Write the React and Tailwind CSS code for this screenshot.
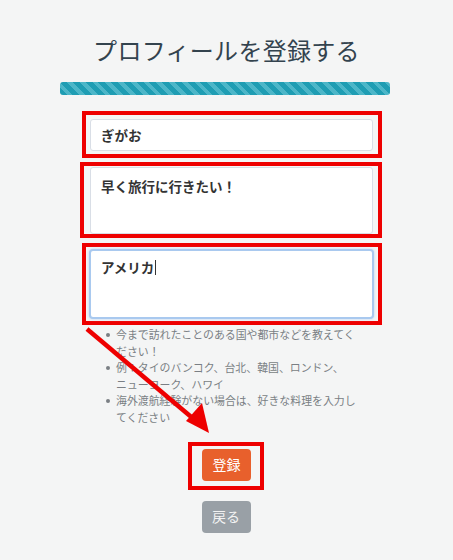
import React from "react";

export default function App() {
  return (
    <div
      className="relative min-h-[560px] w-[453px] bg-[#f4f5f5] overflow-hidden"
      style={{ fontFamily: '"Noto Sans CJK JP", "Noto Sans", sans-serif' }}
    >
      <div className="flex flex-col items-center pt-[34px]">
        <h1 className="text-[24px] font-normal leading-[31px] text-[#33434e] tracking-[0.3px]">
          プロフィールを登録する
        </h1>
        <div className="mt-[17px] ml-[-4px] h-[13px] w-[330px] rounded-[3px] bg-[repeating-linear-gradient(45deg,#1f9db3_0px,#1f9db3_5px,#4cb6c8_5px,#4cb6c8_9px)]" />
      </div>

      <div className="ml-[82px] mt-[16px] flex w-[300px] flex-col">
        <div className="border-4 border-[#ee0000] pl-[4px] pr-[5px] pt-[4px] pb-[3px]">
          <div className="flex h-[32px] items-center rounded-[3px] border border-[#d9dee6] bg-white pl-[10px] text-[13.5px] font-bold text-[#333]">
            ぎがお
          </div>
        </div>
        <div className="mt-[4px] ml-[-2px] w-[302px] border-4 border-[#ee0000] pl-[6px] pr-[5px] pt-[1px] pb-[0px]">
          <div className="h-[67px] rounded-[3px] border border-[#d9dee6] bg-white pl-[10px] pt-[8px] text-[13.5px] font-bold leading-[20px] text-[#333]">
            早く旅行に行きたい！
          </div>
        </div>
        <div className="mt-[5px] border-4 border-[#ee0000] pl-[3px] pr-[4px] pt-[2px] pb-[2px]">
          <div className="h-[70px] rounded-[4px] border-2 border-[#a9c9ef] bg-white pl-[10px] pt-[6px] text-[13.5px] font-bold leading-[20px] text-[#333] shadow-[0_0_3px_#b9d4f5]">
            アメリカ<span className="ml-[1px] inline-block h-[15px] w-px translate-y-[2px] bg-[#333]" />
          </div>
        </div>

        <ul className="ml-[24px] mt-[1px] text-[10.9px] leading-[16.6px] text-[#7a7f84] whitespace-nowrap">
          <li className="flex">
            <span className="mr-[6px] mt-[6.5px] h-[4px] w-[4px] shrink-0 rounded-full bg-[#7a7f84]" />
            <span>今まで訪れたことのある国や都市などを教えてく<br />ださい！</span>
          </li>
          <li className="flex">
            <span className="mr-[6px] mt-[6.5px] h-[4px] w-[4px] shrink-0 rounded-full bg-[#7a7f84]" />
            <span>例：タイのバンコク、台北、韓国、ロンドン、<br />ニューヨーク、ハワイ</span>
          </li>
          <li className="flex">
            <span className="mr-[6px] mt-[6.5px] h-[4px] w-[4px] shrink-0 rounded-full bg-[#7a7f84]" />
            <span>海外渡航経験がない場合は、好きな料理を入力し<br />てください</span>
          </li>
        </ul>
      </div>

      <div className="mt-[16px] flex flex-col items-center">
        <div className="ml-[-1px] border-4 border-[#ee0000] pl-[10px] pr-[9px] pt-[3px] pb-[5px]">
          <button className="flex h-[32px] w-[49px] items-center justify-center rounded-[4px] bg-[#e8602c] text-[14px] text-white">
            登録
          </button>
        </div>
        <button className="mt-[11px] ml-[-1px] flex h-[32px] w-[49px] items-center justify-center rounded-[4px] bg-[#99a0a6] text-[14px] text-[#f2f2f2]">
          戻る
        </button>
      </div>

      <svg className="pointer-events-none absolute left-0 top-0" width="453" height="560">
        <line x1="87" y1="329" x2="196" y2="421" stroke="#ee0000" strokeWidth="4.5" strokeLinecap="butt" />
        <polygon points="209,433 186,421 202,403" fill="#ee0000" />
      </svg>
    </div>
  );
}
